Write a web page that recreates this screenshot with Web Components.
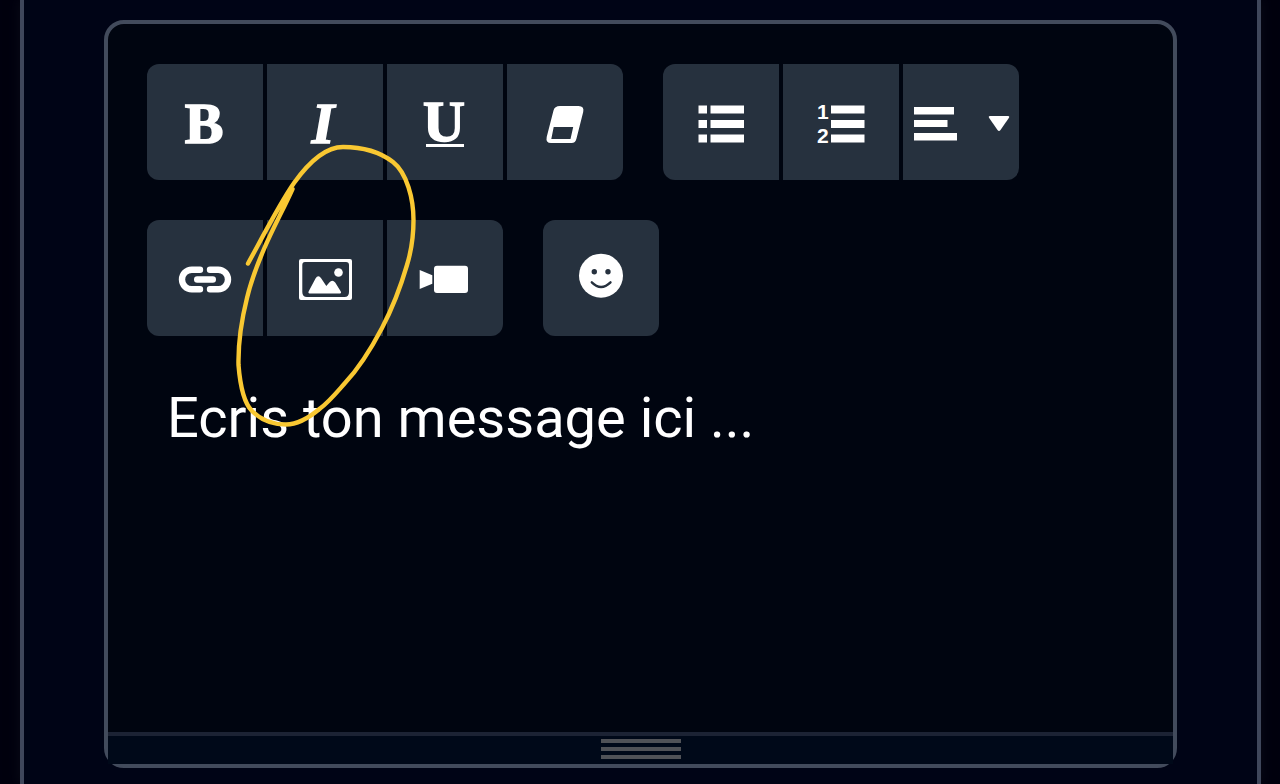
<!DOCTYPE html>
<html lang="fr">
<head>
<meta charset="utf-8">
<meta name="viewport" content="width=device-width, initial-scale=1">
<title>Éditeur de message</title>
<style>
  body { margin: 0; background: #00000e; color: #fff; font-family: Roboto, sans-serif; }
</style>
</head>
<body>
<message-panel>
  <message-editor>
    <tool-group slot="tools" label="Style du texte">
      <tool-button icon="bold" label="Gras"></tool-button>
      <tool-button icon="italic" label="Italique"></tool-button>
      <tool-button icon="underline" label="Souligné"></tool-button>
      <tool-button icon="eraser" label="Effacer la mise en forme"></tool-button>
    </tool-group>
    <tool-group slot="tools" label="Paragraphe">
      <tool-button icon="bullets" label="Liste à puces"></tool-button>
      <tool-button icon="numbers" label="Liste numérotée"></tool-button>
      <tool-button icon="align" label="Alignement"></tool-button>
    </tool-group>
    <tool-group slot="tools" label="Insertion">
      <tool-button icon="link" label="Lien"></tool-button>
      <tool-button icon="image" label="Image"></tool-button>
      <tool-button icon="video" label="Vidéo"></tool-button>
    </tool-group>
    <tool-group slot="tools" label="Émoticônes">
      <tool-button icon="smiley" label="Émoticône"></tool-button>
    </tool-group>
    <hand-circle slot="annotation"></hand-circle>
  </message-editor>
</message-panel>

<script>
const ICONS = {
  bold: `<text class="serif" x="57" y="79" text-anchor="middle">B</text>`,
  italic: `<text class="serif" font-style="italic" x="56" y="79" text-anchor="middle">I</text>`,
  underline: `<text class="serif" x="57" y="77" text-anchor="middle">U</text><rect x="39" y="80" width="38" height="3"/>`,
  eraser: `<path fill-rule="evenodd" d="M53 42H71.500Q77.500 42 76.200 48L69.500 74.500Q68.500 79 64.500 79H44Q38.500 79 39.700 73L46.500 46.500Q47.500 42 53 42ZM46.700 63 44.300 75H63.500L66.200 63Z"/>`,
  bullets: `<path d="M35.500 41.500h8.500v8h-8.500zM47.500 41.500h33.500v8h-33.500zM35.500 56h8.500v8h-8.500zM47.500 56h33.500v8h-33.500zM35.500 70.500h8.500v8h-8.500zM47.500 70.500h33.500v8h-33.500z"/>`,
  numbers: `<text class="digit" x="34" y="55">1</text><text class="digit" x="34" y="79">2</text><path d="M48 41.500h33.500v8h-33.500zM48 56h33.500v8h-33.500zM48 70.500h33.500v8h-33.500z"/>`,
  align: `<path d="M11 43h40v7.500h-40zM11 56h33.500v7h-33.500zM11 69h43v7.500h-43z"/><path d="M87 52H105Q107 52 105.800 54L97.500 66Q96 68 94.500 66L86.200 54Q85 52 87 52Z"/>`,
  link: `<path class="line" d="M53 49.700H44.800a9.800 9.800 0 0 0 0 19.600H53M63 49.700H71.200a9.800 9.800 0 0 1 0 19.600H63M50.200 59.500H65.800"/>`,
  image: `<path fill-rule="evenodd" d="M34 39H83Q85 39 85 41V78Q85 80 83 80H34Q32 80 32 78V41Q32 39 34 39ZM38 42Q35.300 42 35.300 45V72Q35.300 77 40 77H77.500Q82 77 82 72V45Q82 42 79 42Z"/><path d="M42.500 73.500Q40.800 73.500 41.600 71.600L48.500 58.500Q51.300 53.800 54.300 58.500L59.300 66L62.300 62.500Q65.300 58.800 68.200 62.500L73.800 71.600Q74.800 73.500 73 73.500Z"/><circle cx="71.500" cy="52.500" r="4.300"/>`,
  video: `<rect x="47" y="45.700" width="34" height="27.300" rx="3"/><path d="M32.700 50 45.300 55.300V63.700L32.700 69Z"/>`,
  smiley: `<circle cx="58" cy="55.700" r="22"/><g class="cut"><circle cx="51.300" cy="51.700" r="2.700"/><circle cx="65" cy="51.700" r="2.700"/></g><path class="mouth" d="M48.800 62.300Q58 71.500 67.500 62.300"/>`
};

class MessagePanel extends HTMLElement {
  constructor() {
    super();
    this.attachShadow({ mode: 'open' }).innerHTML = `
      <style>
        :host {
          display: flex; flex-direction: column; box-sizing: border-box;
          min-height: 100vh; margin: 0 19px 0 20px; padding: 20px 80px 16px;
          border: solid #3f475b; border-width: 0 4px;
          background: #000416; box-shadow: 0 0 12px #0a0c18;
        }
      </style>
      <slot></slot>`;
  }
}

class MessageEditor extends HTMLElement {
  constructor() {
    super();
    this.attachShadow({ mode: 'open' }).innerHTML = `
      <style>
        :host {
          display: flex; flex-direction: column; flex: 1; position: relative;
          border: 4px solid #424b5c; border-radius: 20px; background: #000510;
        }
        .tools { display: flex; flex-wrap: wrap; gap: 40px; padding: 40px 39px; }
        textarea {
          flex: 1; min-height: 120px; margin: 0; padding: 8px 59px; box-sizing: border-box;
          border: 0; outline: 0; resize: none; background: none; color: #fff;
          font: 400 56px/68px Roboto, sans-serif;
        }
        textarea::placeholder { color: #fff; opacity: 1; }
        .grip {
          display: flex; flex-direction: column; align-items: center; gap: 4px;
          padding: 3px 0 5px; border-top: 4px solid #1c2334; background: #000919;
        }
        .grip i { width: 80px; height: 4px; background: #505257; }
      </style>
      <div class="tools" role="toolbar" aria-label="Mise en forme"><slot name="tools"></slot></div>
      <textarea aria-label="Message" placeholder="Ecris ton message ici ..."></textarea>
      <div class="grip"><i></i><i></i><i></i></div>
      <slot name="annotation"></slot>`;
  }
}

class ToolGroup extends HTMLElement {
  constructor() {
    super();
    this.attachShadow({ mode: 'open' }).innerHTML = `
      <style>
        :host { display: block; border-radius: 12px; overflow: hidden; }
        div { display: flex; gap: 4px; }
      </style>
      <div role="group"><slot></slot></div>`;
  }
  connectedCallback() {
    this.shadowRoot.querySelector('div').setAttribute('aria-label', this.getAttribute('label'));
  }
}

class ToolButton extends HTMLElement {
  constructor() {
    super();
    this.attachShadow({ mode: 'open' });
  }
  connectedCallback() {
    const icon = this.getAttribute('icon');
    this.shadowRoot.innerHTML = `
      <style>
        :host { display: block; }
        button { display: block; margin: 0; padding: 0; border: 0; background: #26313e; color: #fff; cursor: pointer; }
        svg { display: block; width: 116px; height: 116px; fill: currentColor; }
        .serif { font: bold 58px "Liberation Serif", serif; stroke: currentColor; stroke-width: 1.6; }
        .serif[font-style] { font-style: italic; }
        .digit { font: bold 21px "Liberation Sans", sans-serif; }
        .line { fill: none; stroke: currentColor; stroke-width: 6.4; stroke-linecap: round; }
        .cut { fill: #26313e; }
        .mouth { fill: none; stroke: #26313e; stroke-width: 2.4; stroke-linecap: round; }
      </style>
      <button type="button" aria-label="${this.getAttribute('label')}"${icon === 'align' ? ' aria-haspopup="true"' : ''}>
        <svg viewBox="0 0 116 116" aria-hidden="true">${ICONS[icon]}</svg>
      </button>`;
  }
}

class HandCircle extends HTMLElement {
  constructor() {
    super();
    this.attachShadow({ mode: 'open' }).innerHTML = `
      <style>
        :host { display: block; position: absolute; left: 122px; top: 116px; pointer-events: none; }
        svg { display: block; width: 190px; height: 290px; fill: none; stroke: #f9c832; stroke-linecap: round; stroke-linejoin: round; }
      </style>
      <svg viewBox="230 140 190 290" aria-hidden="true">
        <path stroke-width="4.400" d="M248 263.500C262 238 280 203 294 183C304 169 322 147 343 147C362 147 380 152 393 162C407 173 413.500 199 413.500 220C413.500 238 411 252 407 265C400 289 392 309 382 328C371 349 360 367 345 383C337 392 329 402 320 408.500C310 417 298 424.500 286 424.500C272 424.500 260 419 252 411C243 402 240 384 238.500 365C238 340 242 318 247 298C251 281 258 263 264 249C272 230 284 208 292.500 189"/>
      </svg>`;
  }
}

customElements.define('message-panel', MessagePanel);
customElements.define('message-editor', MessageEditor);
customElements.define('tool-group', ToolGroup);
customElements.define('tool-button', ToolButton);
customElements.define('hand-circle', HandCircle);
</script>
</body>
</html>
